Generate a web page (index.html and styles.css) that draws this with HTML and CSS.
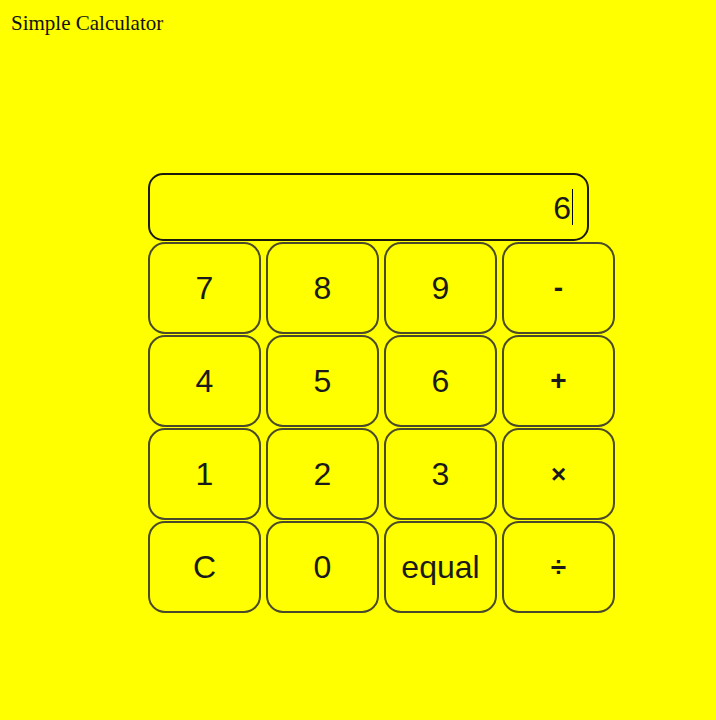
FILE: index.html
```html
<!DOCTYPE html>
<html>
<head>
<meta charset="utf-8">
<link rel="stylesheet" href="styles.css">
</head>
<body>
<div class="title">Simple Calculator</div>
<div class="calc">
  <div class="display"><span class="val">6</span><span class="caret"></span></div>
  <div class="keys">
    <div class="key">7</div>
    <div class="key">8</div>
    <div class="key">9</div>
    <div class="key op">-</div>
    <div class="key">4</div>
    <div class="key">5</div>
    <div class="key">6</div>
    <div class="key op">+</div>
    <div class="key">1</div>
    <div class="key">2</div>
    <div class="key">3</div>
    <div class="key op small">×</div>
    <div class="key">C</div>
    <div class="key">0</div>
    <div class="key">equal</div>
    <div class="key op">÷</div>
  </div>
</div>
</body>
</html>
```
FILE: styles.css
```css
html, body {
  margin: 0;
  padding: 0;
  background: #ffff00;
}
body {
  width: 716px;
  height: 720px;
  overflow: hidden;
}
.title {
  font-family: "Liberation Serif", serif;
  font-size: 21px;
  line-height: 24px;
  color: #111;
  padding: 11px 0 0 11px;
}
.calc {
  margin: 138px 0 0 148px;
  width: 467px;
}
.display {
  box-sizing: border-box;
  width: 441px;
  height: 68px;
  border: 2px solid #1c1a0a;
  border-radius: 15px;
  display: flex;
  align-items: center;
  justify-content: flex-end;
  padding-right: 14px;
  font-family: "Liberation Sans", Arial, sans-serif;
  font-size: 32px;
  color: #1a1a1a;
}
.val {
  position: relative;
  top: 1px;
}
.caret {
  display: inline-block;
  width: 1px;
  height: 36px;
  background: #000;
  margin-left: 1px;
}
.keys {
  margin-top: 1px;
  display: grid;
  grid-template-columns: repeat(4, 113px);
  grid-auto-rows: 92px;
  column-gap: 5px;
  row-gap: 1px;
}
.key {
  box-sizing: border-box;
  border: 2px solid #4a4a2a;
  border-radius: 17px;
  display: flex;
  align-items: center;
  justify-content: center;
  font-family: "Liberation Sans", Arial, sans-serif;
  font-size: 32px;
  color: #1a1a1a;
}
.key.op {
  font-weight: bold;
  font-size: 28px;
}
.key.small {
  font-size: 26px;
}
```
